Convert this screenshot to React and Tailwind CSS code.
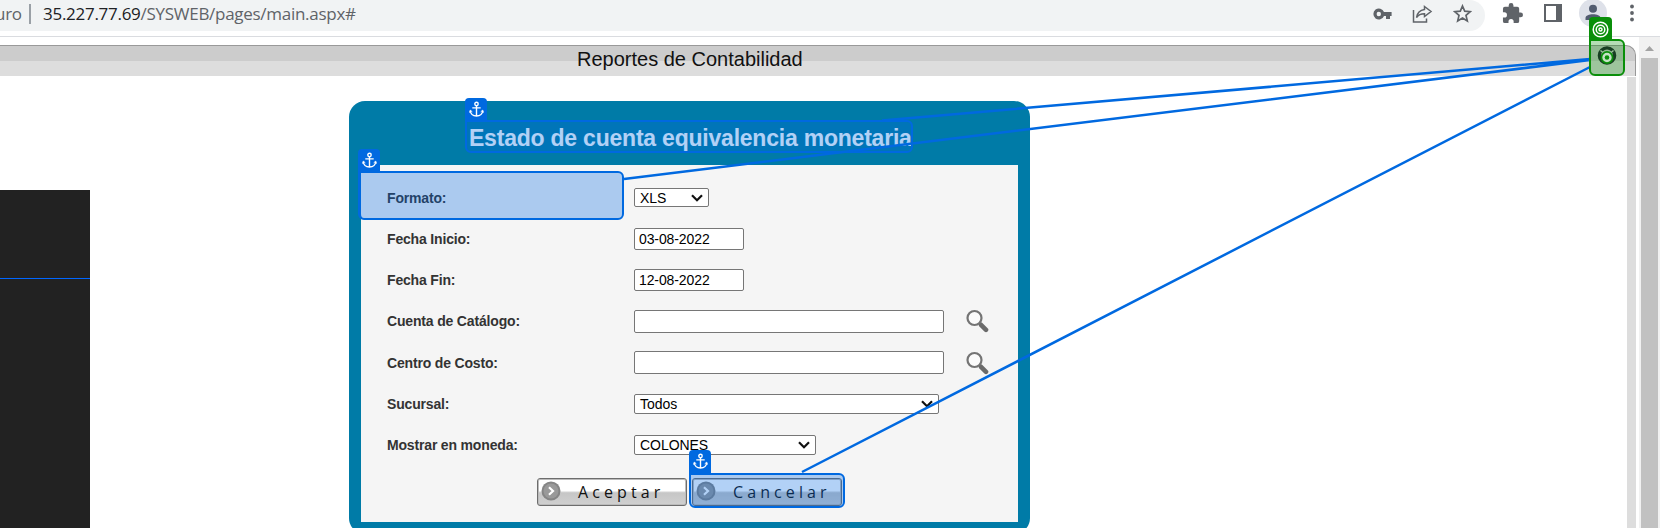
import React from "react";

const Anchor = () => (
  <svg className="h-[17px] w-[15px]" viewBox="0 0 15 17" fill="none" stroke="white" strokeWidth="1.4">
    <circle cx="7.5" cy="3" r="1.7" />
    <path d="M7.5 4.7V15M3.3 6.9h8.4M1.3 9.8c.3 3 2.6 5.2 6.2 5.2s5.9-2.2 6.2-5.2" />
    <path d="M.6 11.6l.7-2.4 2 1.6M14.4 11.6l-.7-2.4-2 1.6" strokeWidth="1" />
  </svg>
);

const Mark = ({ className, badge }) => (
  <div className={"absolute rounded-md rounded-tl-none border-2 border-[#0069e0] bg-[#0066e0]/30 " + className}>
    <div className={"absolute flex h-[23px] w-[22px] items-center justify-center rounded-t-[4px] bg-[#0069e0] " + badge}>
      <Anchor />
    </div>
  </div>
);

const Chevron = () => (
  <svg className="h-[8px] w-[12px]" viewBox="0 0 12 8" fill="none" stroke="#111" strokeWidth="2.2">
    <path d="M1 1.2l5 5 5-5" />
  </svg>
);

const Select = ({ className, children }) => (
  <div className={"flex items-center justify-between rounded-[2px] border border-[#767676] bg-white pr-[5px] pl-[5px] text-[14px] leading-none tracking-[-0.05px] text-black " + className}>
    <span>{children}</span>
    <Chevron />
  </div>
);

const Input = ({ className, children }) => (
  <div className={"flex items-center rounded-[2px] border border-[#767676] bg-white pl-[4px] text-[14px] leading-none tracking-[-0.1px] text-black " + className}>
    {children}
  </div>
);

const Magnifier = () => (
  <svg className="ml-[22px] h-[24px] w-[23px]" viewBox="0 0 23 24">
    <path d="M15 15.8l5 5" stroke="#6a6a6a" strokeWidth="4.6" strokeLinecap="round" />
    <circle cx="8.500" cy="9" r="7" fill="#fbfbfb" stroke="#747474" strokeWidth="2.200" />
  </svg>
);

const Row = ({ label, children }) => (
  <div className="flex h-[41.25px] items-center">
    <div className="w-[247px] shrink-0 text-[14px] leading-none font-bold tracking-[-0.17px] text-[#333]">{label}</div>
    {children}
  </div>
);

const ImageButton = ({ children }) => (
  <div className="flex h-[28px] w-[150px] items-center rounded-[3px] border border-[#6d6d6d] bg-[linear-gradient(#fff_0%,#fff_45%,#c6c6c6_53%,#d0d0d0_100%)] pl-[3px] shadow-[inset_0_0_0_1px_#bbb]">
    <svg className="-mt-[2px] h-[20px] w-[20px]" viewBox="0 0 20 20">
      <circle cx="10" cy="10" r="9.500" fill="#858585" />
      <circle cx="10" cy="10" r="7.500" fill="#999" />
      <path d="M8 6.300l4 3.700-4 3.700" fill="none" stroke="white" strokeWidth="2.200" />
    </svg>
    <span className="ml-[17px] pt-[1px] tracking-[4.1px]">{children}</span>
  </div>
);

export default function App() {
  return (
    <div className="relative flex h-[528px] w-[1660px] flex-col overflow-hidden bg-white font-['Liberation_Sans',Arial,sans-serif]">
      <header className="flex h-[37px] shrink-0 items-start border-b border-[#dadce0]">
        <div className="flex h-[31px] w-[1485px] items-center rounded-r-[16px] bg-[#f1f3f4] font-['Open_Sans',sans-serif] text-[17px] leading-none text-[#5f6368]">
          <span className="-ml-[5px] w-[26px] pb-[5px] tracking-[-0.3px]">uro</span>
          <span className="-mt-[3px] ml-[8px] h-[20px] w-[2px] bg-[#9aa0a6]" />
          <span className="ml-[12px] pb-[5px] tracking-[-0.28px]"><span className="text-[#202124]">35.227.77.69</span>/SYSWEB/pages/main.aspx#</span>
          <div className="mr-[13px] ml-auto flex items-center pb-[4px]">
            <svg className="h-[12px] w-[19px]" viewBox="0 0 19 12" fill="#5f6368" fillRule="evenodd">
              <path d="M11 4A5.500 5.500 0 1 0 11 8h2v3h4V8h1.600V4zM5.800 3.800a2.200 2.200 0 1 1 0 4.400 2.200 2.200 0 0 1 0-4.400z" />
            </svg>
            <svg className="ml-[20px] h-[18px] w-[21px]" viewBox="0 0 21 18" fill="none" stroke="#5f6368" strokeWidth="1.5">
              <path d="M1.500 5v12h13v-3.500M12.500 1.500l6.500 5-6.500 5V8.700c-3.700 0-6 .8-8 3.800.7-4.500 3.500-7.500 8-8.100z" />
            </svg>
            <svg className="ml-[20px] h-[19px] w-[19px]" viewBox="0 0 19 19" fill="none" stroke="#5f6368" strokeWidth="1.7">
              <path d="M9.500 2l2.200 5.200 5.600.5-4.300 3.700 1.300 5.500-4.800-2.900-4.800 2.900L6 11.400 1.700 7.700l5.600-.5z" />
            </svg>
          </div>
        </div>
        <svg className="mt-[3px] ml-[17px] h-[21px] w-[21px]" viewBox="1 1 22 22" fill="#5f6368">
          <path d="M20.500 11H19V7a2 2 0 0 0-2-2h-4V3.500a2.500 2.500 0 0 0-5 0V5H4a2 2 0 0 0-2 2v3.800h1.500a2.700 2.700 0 0 1 0 5.400H2V20a2 2 0 0 0 2 2h3.800v-1.500a2.700 2.700 0 0 1 5.400 0V22H17a2 2 0 0 0 2-2v-4h1.500a2.500 2.500 0 0 0 0-5z" />
        </svg>
        <div className="mt-[4px] ml-[21px] h-[18px] w-[18px] border-2 border-r-[6px] border-[#5f6368]" />
        <svg className="ml-[17px] h-[28px] w-[28px]" viewBox="0 0 28 28">
          <circle cx="14" cy="13" r="14" fill="#dee1e9" />
          <circle cx="14" cy="8.800" r="4" fill="#525c70" />
          <path d="M6.500 20v-2c0-5 15-5 15 0v2z" fill="#525c70" />
        </svg>
        <svg className="ml-[22px] h-[24px] w-[6px]" viewBox="0 0 6 24" fill="#5f6368">
          <circle cx="3" cy="6.500" r="1.900" /><circle cx="3" cy="13" r="1.900" /><circle cx="3" cy="19.500" r="1.900" />
        </svg>
      </header>

      <div className="flex min-h-0 flex-1">
        <main className="flex w-[1636px] flex-col pt-[8px]">
          <div className="h-[31px] shrink-0 rounded-tr-[10px] border-t border-r border-[#999] bg-[linear-gradient(#ccc_0_15px,#ddd_15px)] pl-[577px] text-[20px] leading-[27px] text-[#111]">
            Reportes de Contabilidad
          </div>
          <div className="mt-[1px] flex min-h-0 flex-1 items-start border-r-[9px] border-[#ddd]">
            <aside className="mt-[113px] h-[338px] w-[90px] shrink-0 bg-[#222] pt-[88px]">
              <div className="h-px bg-[#0066ff]" />
            </aside>
            <section className="mt-[24px] ml-[259px] h-[433px] w-[681px] shrink-0 rounded-[16px] bg-[#007ba7] px-[12px]">
              <h1 className="h-[64px] pl-[108px] text-[23px] leading-[74px] font-bold tracking-[-0.22px] whitespace-nowrap text-white">
                Estado de cuenta equivalencia monetaria
              </h1>
              <div className="h-[357px] bg-[#f5f5f5] pt-[12px] pl-[26px]">
                <Row label="Formato:"><Select className="h-[19px] w-[75px]">XLS</Select></Row>
                <Row label="Fecha Inicio:"><Input className="h-[22px] w-[110px]">03-08-2022</Input></Row>
                <Row label="Fecha Fin:"><Input className="h-[22px] w-[110px]">12-08-2022</Input></Row>
                <Row label="Cuenta de Catálogo:"><Input className="h-[23px] w-[310px]" /><Magnifier /></Row>
                <Row label="Centro de Costo:"><Input className="h-[23px] w-[310px]" /><Magnifier /></Row>
                <Row label="Sucursal:"><Select className="h-[20px] w-[305px]">Todos</Select></Row>
                <Row label="Mostrar en moneda:"><Select className="h-[20px] w-[182px]">COLONES</Select></Row>
                <div className="mt-[12px] ml-[150px] flex gap-[5px] font-['Open_Sans',sans-serif] text-[16px] leading-none text-[#111]">
                  <ImageButton>Aceptar</ImageButton>
                  <ImageButton>Cancelar</ImageButton>
                </div>
              </div>
            </section>
          </div>
        </main>
        <div className="ml-[3px] w-[21px] bg-[#f1f1f1]">
          <svg className="h-[21px] w-[21px]" viewBox="0 0 21 21"><path d="M6 14l4.500-5 4.500 5z" fill="#a3a3a3" /></svg>
          <div className="ml-[2px] h-[470px] w-[17px] bg-[#c1c1c1]" />
        </div>
      </div>

      <Mark className="top-[120px] left-[465px] h-[33px] w-[448px]" badge="-top-[24px] -left-[2px]" />
      <Mark className="top-[171px] left-[358px] h-[49px] w-[266px] border-l-[3px]" badge="-top-[24px] -left-[3px]" />
      <Mark className="top-[473px] left-[689px] h-[35px] w-[156px]" badge="-top-[25px] -left-[2px]" />
      <svg className="absolute inset-0 h-[528px] w-[1660px]" viewBox="0 0 1660 528" stroke="#0069e0" strokeWidth="2.500">
        <path d="M882 120.500L1590 59M624 179L1590 60M802 472L1590 67" fill="none" />
      </svg>
      <div className="absolute top-[39px] left-[1589px] h-[37px] w-[36px] rounded-md rounded-tl-none border-2 border-[#0a8f0a] bg-[#0a8f0a]/30">
        <div className="absolute -top-[24px] -left-[2px] flex h-[24px] w-[23px] items-center justify-center rounded-t-[4px] bg-[#0a8f0a]">
          <svg className="h-[17px] w-[17px]" viewBox="0 0 17 17" fill="none" stroke="white" strokeWidth="1.500">
            <circle cx="8.500" cy="8.500" r="7.300" /><circle cx="8.500" cy="8.500" r="4.300" /><circle cx="8.500" cy="8.500" r="1.500" />
          </svg>
        </div>
        <svg className="absolute top-[5px] left-[6px] h-[20px] w-[20px]" viewBox="0 0 20 20">
          <circle cx="10" cy="9.500" r="7.600" fill="none" stroke="#173f22" strokeWidth="3.400" />
          <path d="M3.500 4.500l3 2.500M16.500 4.500l-3 2.500" stroke="#9cc49c" strokeWidth="1.400" />
          <circle cx="10" cy="11.500" r="5.600" fill="#c5e2c5" stroke="#0a8f0a" strokeWidth="1.800" />
          <circle cx="10" cy="11.500" r="2.300" fill="#0a8f0a" />
        </svg>
      </div>
    </div>
  );
}
